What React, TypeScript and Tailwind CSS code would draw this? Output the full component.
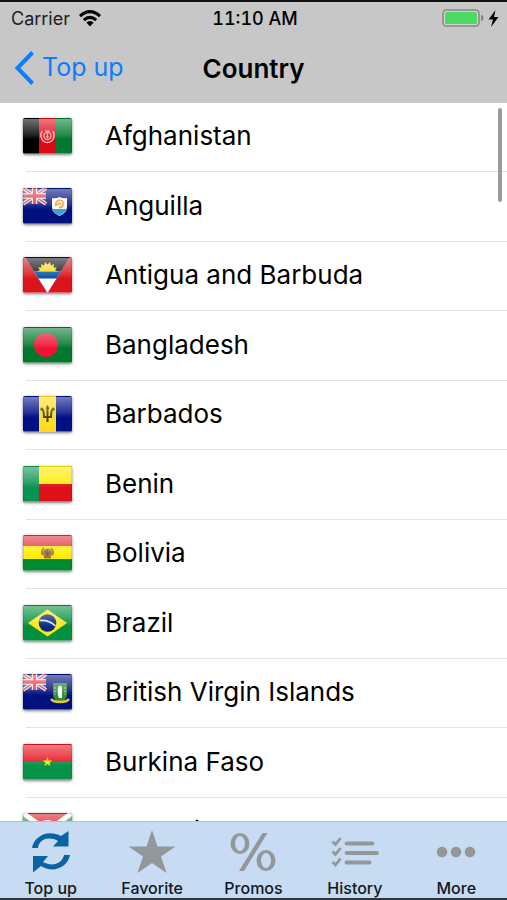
import type { ReactNode } from "react";

/** Union Jack canton shared by the overseas territories */
function Canton() {
  return (
    <g>
      <rect width="23" height="16" fill="#2a3a92" />
      <path d="M0 0 23 16M23 0 0 16" stroke="#fff" strokeWidth="3.6" />
      <path d="M0 0 23 16M23 0 0 16" stroke="#e0485a" strokeWidth="1.8" />
      <path d="M11.5 0V16M0 8H23" stroke="#fff" strokeWidth="5.4" />
      <path d="M11.5 0V16M0 8H23" stroke="#dd3a4c" strokeWidth="3.4" />
    </g>
  );
}

const flags: Record<string, ReactNode> = {
  Afghanistan: (
    <>
      <rect width="16" height="36" fill="#000" />
      <rect x="16" width="17" height="36" fill="#dc0a16" />
      <rect x="33" width="16" height="36" fill="#007a30" />
      <g fill="none" stroke="#f6b3b3">
        <path d="M19 13C16.500 18 18.500 24 24.500 24.500 30.500 24 32.500 18 30 13" strokeWidth="1.5" />
        <circle cx="24.500" cy="18" r="3.600" strokeWidth="1.300" />
        <path d="M24.500 15.500v5M22.500 19h4M22 13h5" strokeWidth="1.200" />
      </g>
    </>
  ),
  Anguilla: (
    <>
      <rect width="49" height="36" fill="#00107e" />
      <Canton />
      <path d="M29 10q4 1 7.500-1 3.500 2 7.500 1v9q0 6-7.500 9-7.500-3-7.500-9z" fill="#fafafa" />
      <path d="M29.500 21h14q-1 4-7 6.500-6-2.500-7-6.500z" fill="#36a5cf" />
      <path d="M33 18q-1-5 3-6 5 0 4 4 0 4-4 3.500M35 14l3 3M33 17l3-1" fill="none" stroke="#f0a03c" strokeWidth="1.700" />
    </>
  ),
  "Antigua and Barbuda": (
    <>
      <rect width="49" height="36" fill="#dc141e" />
      <path d="M2 0H47L24.500 36z" fill="#fff" />
      <path d="M2 0H47L38 14.500H11z" fill="#161616" />
      <path d="M11 14.500H38L33.500 21.500H15.500z" fill="#0553ac" />
      <path
        d="M14 14.500l3-1.500-2-2.500 3.400 0-.4-3.500 3 1.500 1-3.500 2.500 2.500 2.500-2.500 1 3.500 3-1.500-.4 3.500 3.400 0-2 2.500 3 1.500z"
        fill="#ffd823"
      />
    </>
  ),
  Bangladesh: (
    <>
      <rect width="49" height="36" fill="#04772f" />
      <circle cx="23" cy="18" r="12" fill="#ef1233" />
    </>
  ),
  Barbados: (
    <>
      <rect width="49" height="36" fill="#001085" />
      <rect x="16" width="17" height="36" fill="#ffdd20" />
      <path
        d="M24.500 11V26M18.500 12.500q2.500 1 2.500 8.500h7q0-7.500 2.500-8.500M17.500 14l2-2M31.500 14l-2-2M23.500 13l1-2 1 2"
        fill="none"
        stroke="#4a430c"
        strokeWidth="2"
      />
    </>
  ),
  Benin: (
    <>
      <rect width="49" height="36" fill="#de1018" />
      <rect width="49" height="18" fill="#ffeb00" />
      <rect width="16" height="36" fill="#0a9250" />
    </>
  ),
  Bolivia: (
    <>
      <rect width="49" height="36" fill="#008a32" />
      <rect width="49" height="24" fill="#ffec00" />
      <rect width="49" height="11" fill="#df3038" />
      <ellipse cx="24.500" cy="18" rx="5" ry="4.500" fill="#a37c3a" />
      <path d="M19.500 20q-2-4 1.500-7M29.500 20q2-4-1.500-7M21 22.500h7" fill="none" stroke="#c1562c" strokeWidth="1.600" />
      <path d="M24.500 14v7M22 16l2 4M27 16l-2 4" stroke="#476b3c" strokeWidth="1.200" />
    </>
  ),
  Brazil: (
    <>
      <rect width="49" height="36" fill="#05903f" />
      <path d="M24.500 4.500 44 18 24.500 31.500 5 18z" fill="#ffe818" />
      <circle cx="24.500" cy="18" r="8.800" fill="#0b2b86" />
      <path d="M16.500 15.500q9-1 16 5.500" fill="none" stroke="#dcebf5" strokeWidth="1.600" />
    </>
  ),
  "British Virgin Islands": (
    <>
      <rect width="49" height="36" fill="#00107e" />
      <Canton />
      <path d="M30 9h14v11q0 6-7 9-7-3-7-9z" fill="#2b8b3f" />
      <path d="M35 13q2-3 4 0v11h-3q-2-4-1-11z" fill="#f7f7f2" />
      <path d="M32 13v8M42 13v8" stroke="#c5c653" strokeWidth="1.200" strokeDasharray="2 1.500" />
      <path d="M28 25q2 3 9 3t9-3" fill="none" stroke="#e4c834" strokeWidth="2.400" />
    </>
  ),
  "Burkina Faso": (
    <>
      <rect width="49" height="36" fill="#059447" />
      <rect width="49" height="18" fill="#e5111b" />
      <path d="m24.500 13 1.200 3.500h3.700l-3 2.200 1.200 3.600-3.100-2.200-3.100 2.200 1.200-3.600-3-2.200h3.700z" fill="#ffe600" />
    </>
  ),
  Burundi: (
    <>
      <rect width="49" height="36" fill="#2d9a4a" />
      <path d="M0 0H49L24.500 18zM0 36H49L24.500 18z" fill="#dc1a26" />
      <path d="M0 0 49 36M49 0 0 36" stroke="#fff" strokeWidth="5" />
      <circle cx="24.500" cy="18" r="11" fill="#fff" />
    </>
  ),
};

function Flag({ name }: { name: string }) {
  return (
    <span className="relative block h-9 w-[49px] shrink-0 overflow-hidden rounded-xs shadow-[0_1px_3px_rgba(0,0,0,0.5)]">
      <svg width="49" height="36" viewBox="0 0 49 36" aria-hidden="true">
        {flags[name]}
      </svg>
      {/* gloss */}
      <span className="absolute inset-0 rounded-xs border border-black/10 bg-linear-to-b from-white/45 via-white/15 via-45% to-transparent to-60%" />
    </span>
  );
}

function StatusBar() {
  return (
    <div className="grid h-8 grid-cols-3 items-center pl-[11px] pr-2 text-[18px] text-[#1c1c1c]">
      <div className="flex items-center gap-2">
        <span>Carrier</span>
        <svg width="24" height="17" viewBox="0 0 24 17" aria-label="Wi-Fi">
          <g fill="none" stroke="#000" strokeWidth="3">
            <path d="M2 6.200Q12-3 22 6.200" />
            <path d="M5.800 10.200Q12 4.600 18.200 10.200" />
          </g>
          <path d="M8.300 12.600Q12 9.600 15.700 12.600L12 16.500z" />
        </svg>
      </div>
      <span className="text-center font-medium whitespace-nowrap text-black tabular-nums">11:10 AM</span>
      <div className="flex items-center justify-end gap-1">
        <svg width="42" height="18" viewBox="0 0 42 18" aria-label="Battery">
          <rect x="1" y="1" width="36" height="16" rx="3.500" fill="#d0d6d0" stroke="#858585" strokeWidth="1.500" />
          <rect x="3" y="3" width="32" height="12" rx="1.500" fill="#4cd964" />
          <path d="M39 6q2.500 0 2.500 3T39 12z" fill="#858585" />
        </svg>
        <svg width="11" height="17" viewBox="0 0 11 17" aria-label="Charging">
          <path d="M7.500 0 .5 9.500H5L3 17l7.500-10H6z" />
        </svg>
      </div>
    </div>
  );
}

function NavBar() {
  return (
    <div className="grid h-[69px] grid-cols-[1fr_auto_1fr] items-center px-[14px] pb-px">
      <button className="flex items-center gap-2 justify-self-start text-[25px] text-[#0b7cff]">
        <svg width="20" height="34" viewBox="0 0 20 34" fill="none" stroke="currentColor" strokeWidth="4" aria-hidden="true">
          <path d="M18.500 1.500 3.500 17l15 15.500" />
        </svg>
        Top up
      </button>
      <h1 className="text-[26px] font-semibold">Country</h1>
    </div>
  );
}

const tabs = [
  {
    label: "Top up",
    icon: (
      <svg width="40" height="44" viewBox="0 0 40 44" fill="#0a64a4">
        <path d="M1 18C3 6 17-1 30 6L37.500 1V16.500H22L27 11C18 6 8 9 7 18z" />
        <path d="M39 25C37 37 22 44 10 36L2 42.500V26H17L12 32C21 37 31 34 33 25z" />
      </svg>
    ),
  },
  {
    label: "Favorite",
    icon: (
      <svg width="48" height="44" viewBox="0 0 48 44" fill="currentColor">
        <path d="M24 0 29.500 16.500H47.500L33 26.500 38.500 43 24 33 9.500 43 15 26.500.5 16.500H18.500z" />
      </svg>
    ),
  },
  {
    label: "Promos",
    icon: (
      <svg width="48" height="40" viewBox="0 0 48 40" fill="currentColor" fillRule="evenodd">
        <path d="M11 1A9.500 10.500 0 1 1 11 22 9.500 10.500 0 1 1 11 1zM11 4A5 7.500 0 1 0 11 19 5 7.500 0 1 0 11 4z" />
        <path d="M37 18A9.500 10.500 0 1 1 37 39 9.500 10.500 0 1 1 37 18zM37 21A5 7.500 0 1 0 37 36 5 7.500 0 1 0 37 21z" />
        <path d="M33.500 1H38.500L15 39H10z" />
      </svg>
    ),
  },
  {
    label: "History",
    icon: (
      <svg width="48" height="32" viewBox="0 0 48 32" fill="none" stroke="currentColor">
        <path d="M1.500 5.500 4.500 8.500 9.500 2M1.500 15.500 4.500 18.500 9.500 12M1.500 26 4.500 29 9.500 22.500" strokeWidth="2.800" />
        <path d="M15.500 7.500H41.500M15.500 17H46M15.500 26.500H38.500" strokeWidth="3.800" strokeLinecap="round" />
      </svg>
    ),
  },
  {
    label: "More",
    icon: (
      <svg width="40" height="12" viewBox="0 0 40 12" fill="currentColor">
        <circle cx="6" cy="6" r="5.300" />
        <circle cx="20" cy="6" r="5.300" />
        <circle cx="34" cy="6" r="5.300" />
      </svg>
    ),
  },
];

function TabBar() {
  return (
    <nav className="grid shrink-0 grid-cols-5 border-t border-b-2 border-t-[#b4bfcd] border-b-[#2c3440] bg-[#c7dbf2]">
      {tabs.map((tab) => (
        <button key={tab.label} className="flex h-[76px] flex-col items-center text-[#939799]">
          <span className="flex h-[60px] items-center">{tab.icon}</span>
          <span className="text-[16px] leading-3 font-medium text-[#101820]">{tab.label}</span>
        </button>
      ))}
    </nav>
  );
}

export default function App() {
  return (
    <div className="flex h-screen flex-col bg-white font-['Inter',sans-serif] text-black">
      <header className="shrink-0 border-t-2 border-[#111] bg-[#c7c7c7]">
        <StatusBar />
        <NavBar />
      </header>
      <main className="relative min-h-0 flex-1 overflow-hidden">
        <ul>
          {Object.keys(flags).map((name) => (
            <li key={name} className="odd:h-[69px] even:h-[70px]">
              <button className="flex h-full w-full items-stretch pl-[23px] text-left text-[26px]">
                <span className="flex items-center pb-[3px]">
                  <Flag name={name} />
                </span>
                <span className="-ml-[46px] flex flex-1 items-center border-b border-[#e4e4e4] pb-[3px] pl-[79px]">{name}</span>
              </button>
            </li>
          ))}
        </ul>
        {/* scroll indicator */}
        <div className="absolute top-[5px] right-[5px] h-[94px] w-1 rounded-full bg-[#9c9c9c]" />
      </main>
      <TabBar />
    </div>
  );
}
